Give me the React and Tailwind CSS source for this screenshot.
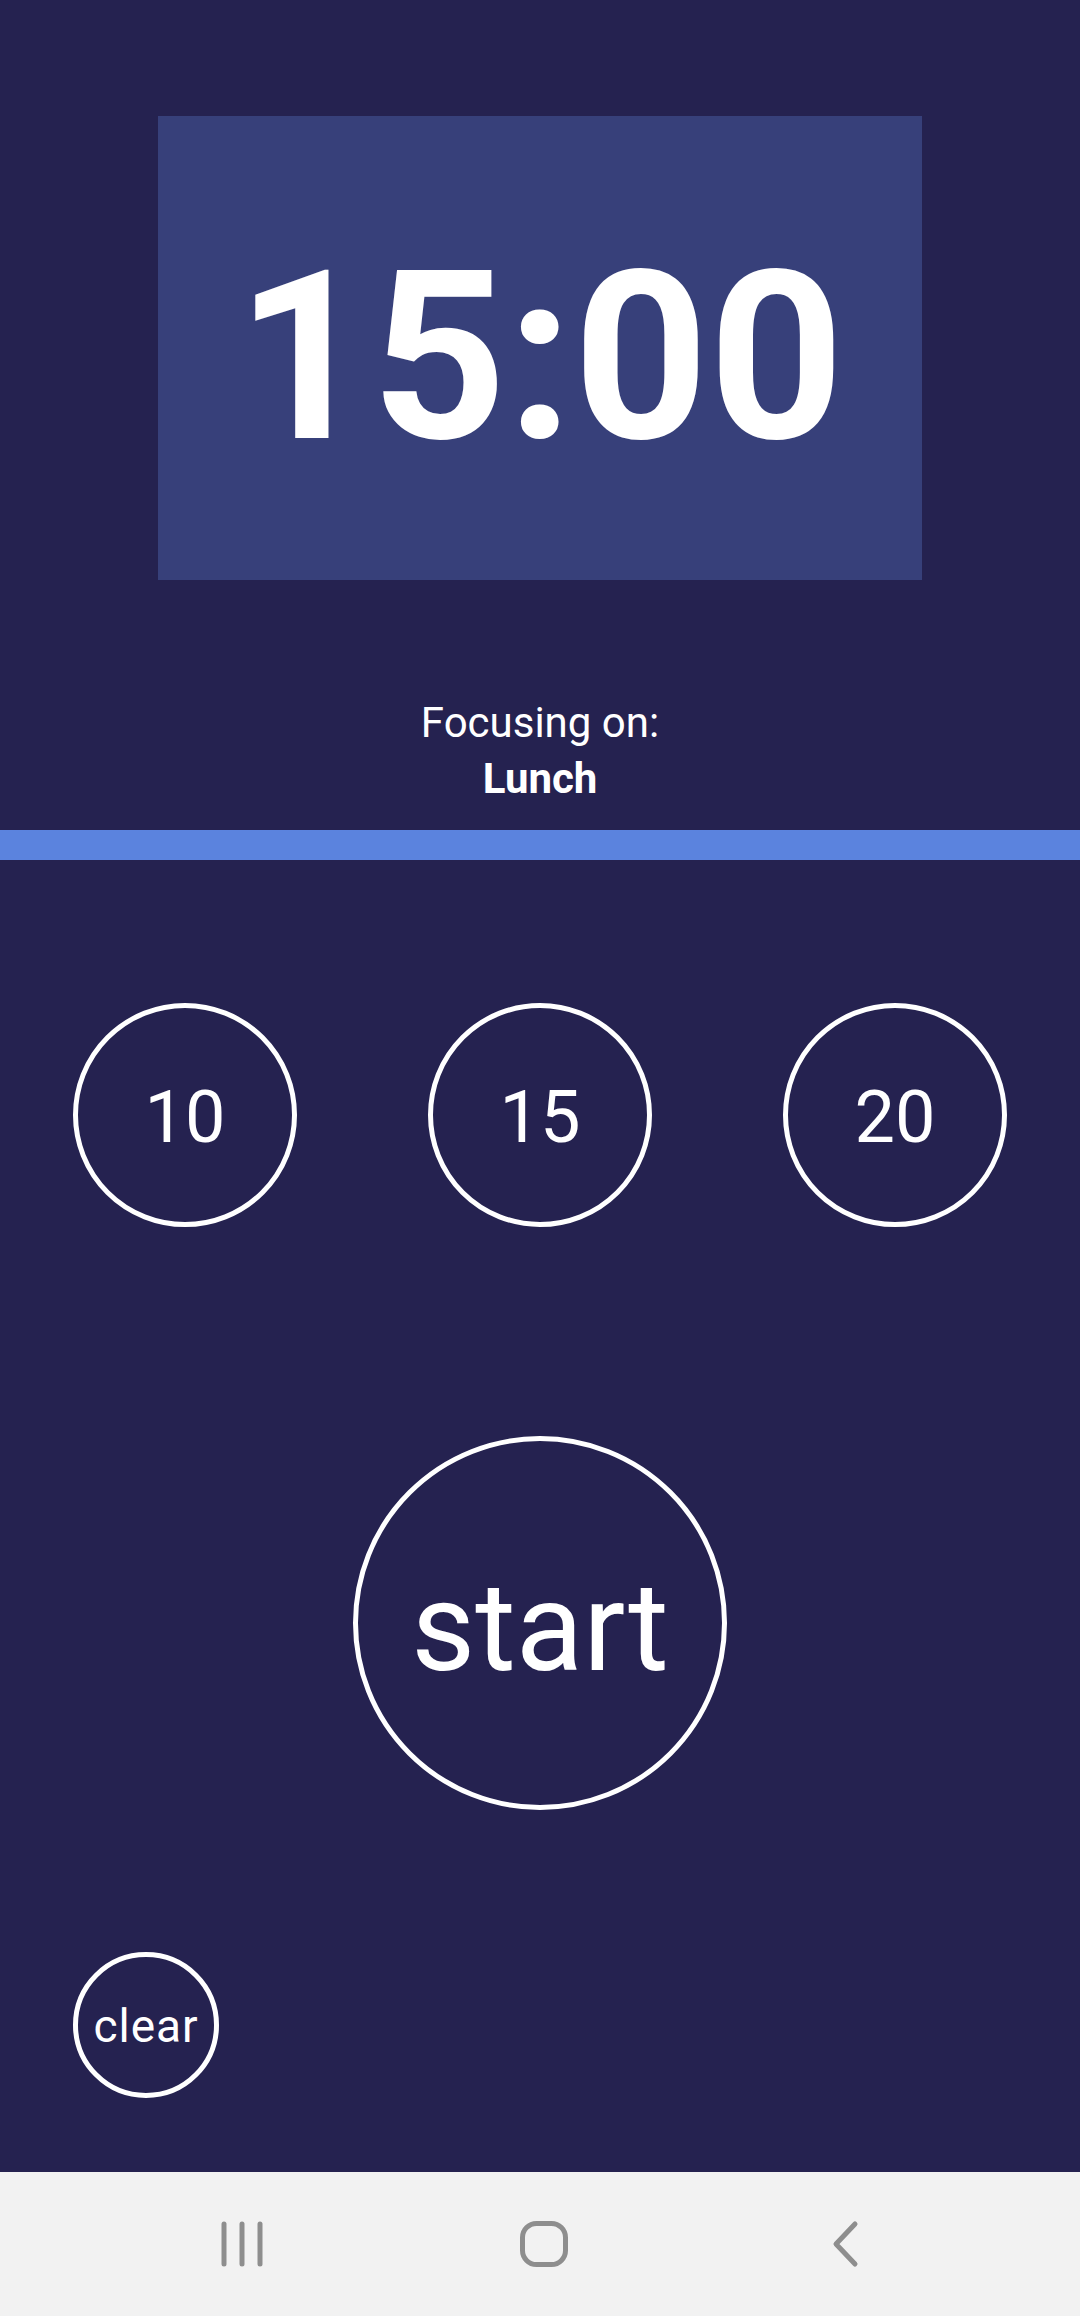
export default function App() {
  const presets = [10, 15, 20];

  return (
    <div className="flex min-h-[2316px] w-[1080px] flex-col bg-[#252250] font-['Roboto',sans-serif] text-white">
      <main className="flex h-[2172px] flex-col">
        {/* timer display */}
        <div className="mx-auto mt-[116px] h-[464px] w-[764px] bg-[#37407a] pt-[124px] text-center">
          <span className="text-[236px] font-bold leading-none">15:00</span>
        </div>

        <div className="mt-[115px] text-center text-[42px] leading-[56px]">
          <p>Focusing on:</p>
          <p className="font-bold">Lunch</p>
        </div>

        <div className="mt-[23px] h-[30px] w-full bg-[#5b83de]" />

        <div className="mt-[143px] flex justify-between px-[73px]">
          {presets.map((m) => (
            <button
              key={m}
              className="flex h-[224px] w-[224px] items-center justify-center rounded-full border-[5px] border-white pt-[6px] text-[72px] leading-none"
            >
              {m}
            </button>
          ))}
        </div>

        <div className="mt-[209px] flex justify-center">
          <button className="flex h-[374px] w-[374px] items-center justify-center rounded-full border-[5px] border-white pt-[10px] text-[124px] leading-none">
            start
          </button>
        </div>

        <div className="mt-[142px] px-[73px]">
          <button className="flex h-[146px] w-[146px] items-center justify-center rounded-full border-[5px] border-white pt-[2px] text-[46px] leading-none tracking-[0.02em]">
            clear
          </button>
        </div>
      </main>

      {/* system nav bar */}
      <nav className="flex h-[144px] items-center justify-center bg-[#f2f2f2] pl-[8px]">
        <div className="flex w-[302px] justify-center">
          <svg width="44" height="48" viewBox="0 0 44 48" fill="none" stroke="#8e8e8e" strokeWidth="5" strokeLinecap="round">
            <line x1="4" y1="4" x2="4" y2="44" />
            <line x1="22" y1="4" x2="22" y2="44" />
            <line x1="40" y1="4" x2="40" y2="44" />
          </svg>
        </div>
        <div className="flex w-[302px] justify-center">
          <svg width="52" height="48" viewBox="0 0 52 48" fill="none" stroke="#8e8e8e" strokeWidth="5">
            <rect x="4.5" y="3.5" width="43" height="41" rx="14" />
          </svg>
        </div>
        <div className="flex w-[302px] justify-center">
          <svg width="30" height="48" viewBox="0 0 30 48" fill="none" stroke="#8e8e8e" strokeWidth="5" strokeLinecap="round" strokeLinejoin="round">
            <polyline points="24,4 5,24 24,44" />
          </svg>
        </div>
      </nav>
    </div>
  );
}
